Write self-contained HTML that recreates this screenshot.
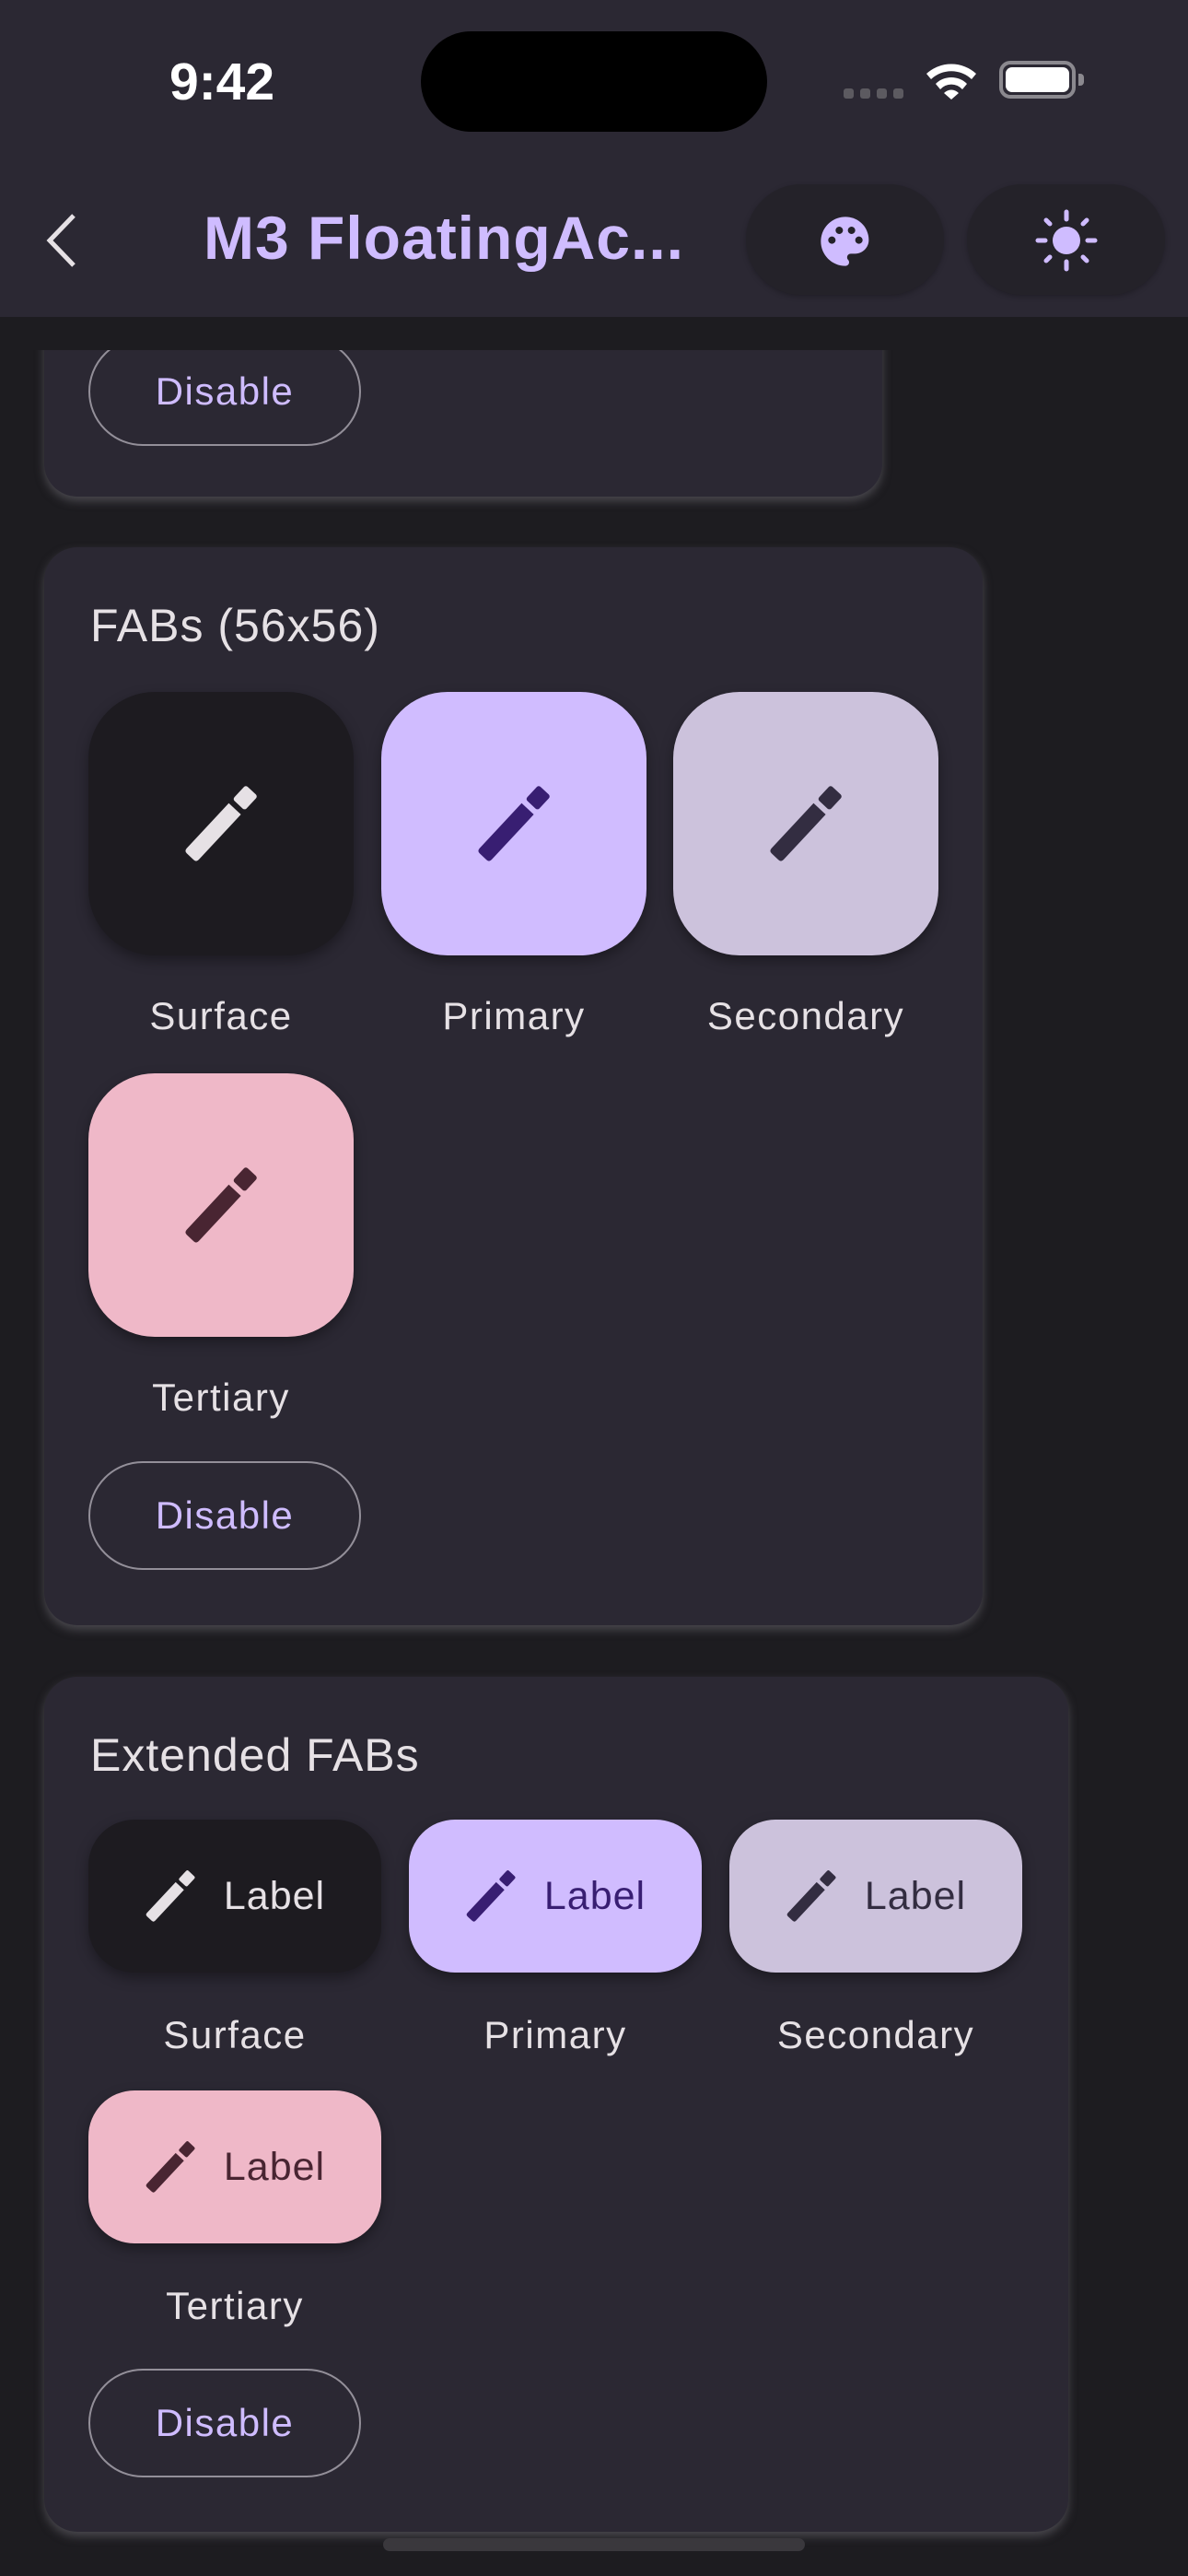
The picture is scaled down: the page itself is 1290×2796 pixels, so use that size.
<!DOCTYPE html>
<html><head><meta charset="utf-8"><style>
*{margin:0;padding:0;box-sizing:border-box}
body{width:1290px;height:2796px;background:#1d1c20;position:relative;overflow:hidden;font-family:"Liberation Sans",sans-serif}
.abs{position:absolute}
.card{position:absolute;background:#2b2833;border-radius:36px;box-shadow:0 5px 10px rgba(110,108,115,.55)}
.title{position:absolute;left:50px;color:#e6e1e5;font-size:50px;letter-spacing:1px}
.fab{position:absolute;width:288px;height:286px;border-radius:72px;box-shadow:0 6px 14px rgba(0,0,0,.35);display:flex;align-items:center;justify-content:center}
.lbl{position:absolute;width:320px;text-align:center;color:#e6e1e5;font-size:42px;letter-spacing:1.5px}
.ext{position:absolute;width:318px;height:166px;border-radius:50px;box-shadow:0 6px 14px rgba(0,0,0,.35);display:flex;align-items:center;justify-content:center;font-size:43px;letter-spacing:1px}
.ext svg{margin-right:30px}
.dis{position:absolute;left:48px;width:296px;height:118px;border:2.5px solid #938f99;border-radius:59px;color:#cfbcff;font-size:42px;display:flex;align-items:center;justify-content:center;letter-spacing:1.5px}
svg{overflow:visible}
</style></head><body>
<!-- card 1 -->
<div class="card" style="left:48px;top:300px;width:910px;height:239px"><div class="dis" style="top:66px">Disable</div></div>
<div class="abs" style="left:0;top:344px;width:1290px;height:36px;background:#1d1c20"></div>
<!-- app bar -->
<div class="abs" style="left:0;top:0;width:1290px;height:344px;background:#2b2833"></div>
<div class="abs" style="left:184px;top:56px;color:#fff;font-size:57px;font-weight:bold">9:42</div>
<div class="abs" style="left:457px;top:34px;width:376px;height:109px;background:#000;border-radius:55px"></div>
<div class="abs" style="left:916px;top:96px;display:flex;gap:7px"><div style="width:11px;height:11px;background:#5c5a60;border-radius:3px"></div><div style="width:11px;height:11px;background:#5c5a60;border-radius:3px"></div><div style="width:11px;height:11px;background:#5c5a60;border-radius:3px"></div><div style="width:11px;height:11px;background:#5c5a60;border-radius:3px"></div></div>
<svg class="abs" style="left:1004px;top:64px" width="58" height="44" viewBox="0 0 58 44"><path d="M2 16 A40 40 0 0 1 56 16 L51 22 A32 32 0 0 0 7 22Z M12 27 A24 24 0 0 1 46 27 L41 33 A16 16 0 0 0 17 33Z M21 37 A11 11 0 0 1 37 37 L29 44Z" fill="#fff"/></svg>
<div class="abs" style="left:1085px;top:66px;width:83px;height:41px;border:4px solid #8b898f;border-radius:12px;padding:3px"><div style="width:100%;height:100%;background:#fff;border-radius:7px"></div></div>
<div class="abs" style="left:1171px;top:80px;width:6px;height:13px;background:#8b898f;border-radius:0 4px 4px 0"></div>
<svg class="abs" style="left:46px;top:230px" width="40" height="62" viewBox="0 0 40 62"><path d="M34 4 L8 31 L34 58" stroke="#e6e1e5" stroke-width="5" fill="none"/></svg>
<div class="abs" style="left:221px;top:220px;color:#cfbcff;font-size:66px;font-weight:bold;letter-spacing:1px">M3 FloatingAc...</div>
<div class="abs" style="left:810px;top:200px;width:215px;height:120px;border-radius:60px;background:#242229;box-shadow:0 2px 6px rgba(0,0,0,.25)"></div>
<div class="abs" style="left:1050px;top:200px;width:215px;height:120px;border-radius:60px;background:#242229;box-shadow:0 2px 6px rgba(0,0,0,.25)"></div>
<svg class="abs" style="left:886px;top:230px" width="64" height="64" viewBox="0 0 24 24"><path d="M12 2C6.5 2 2 6.5 2 12s4.5 10 10 10c.9 0 1.5-.7 1.5-1.5 0-.4-.2-.8-.4-1-.3-.3-.4-.7-.4-1 0-.9.7-1.5 1.5-1.5H16c3 0 5.5-2.5 5.5-5.5C21.5 6 17.2 2 12 2zM6.5 13c-.8 0-1.5-.7-1.5-1.5S5.7 10 6.5 10s1.5.7 1.5 1.5S7.3 13 6.5 13zm3-4C8.7 9 8 8.3 8 7.5S8.7 6 9.5 6s1.5.7 1.5 1.5S10.3 9 9.5 9zm5 0c-.8 0-1.5-.7-1.5-1.5S13.7 6 14.5 6s1.5.7 1.5 1.5S15.3 9 14.5 9zm3 4c-.8 0-1.5-.7-1.5-1.5s.7-1.5 1.5-1.5 1.5.7 1.5 1.5-.7 1.5-1.5 1.5z" fill="#cfbcff"/></svg>
<svg class="abs" style="left:1124px;top:227px" width="68" height="68" viewBox="0 0 68 68" stroke="#cfbcff" stroke-width="5" stroke-linecap="round"><circle cx="34" cy="34" r="15" fill="#cfbcff" stroke="none"/><path d="M34 3v8M34 57v8M3 34h8M57 34h8M12 12l4 4M52 52l4 4M12 56l4-4M52 16l4-4"/></svg>

<svg width="0" height="0" style="position:absolute"><defs><g id="pen" transform="rotate(-47 41 41)"><path d="M-4 32 L63 32 L63 50 L-4 50 Q-8 50 -8 46 L-8 36 Q-8 32 -4 32Z"/><rect x="69" y="32" width="21" height="18" rx="3"/></g></defs></svg>

<!-- card 2 -->
<div class="card" style="left:48px;top:594px;width:1019px;height:1170px">
 <div class="title" style="top:56px">FABs (56x56)</div>
 <div class="fab" style="left:48px;top:157px;background:#1d1b20"><svg width="82" height="82" viewBox="0 0 82 82" fill="#e6e1e5"><use href="#pen"/></svg></div>
 <div class="fab" style="left:366px;top:157px;background:#d0bcff"><svg width="82" height="82" viewBox="0 0 82 82" fill="#381e72"><use href="#pen"/></svg></div>
 <div class="fab" style="left:683px;top:157px;background:#ccc2dc"><svg width="82" height="82" viewBox="0 0 82 82" fill="#332d41"><use href="#pen"/></svg></div>
 <div class="lbl" style="left:32px;top:485px">Surface</div>
 <div class="lbl" style="left:350px;top:485px">Primary</div>
 <div class="lbl" style="left:667px;top:485px">Secondary</div>
 <div class="fab" style="left:48px;top:571px;background:#efb8c8"><svg width="82" height="82" viewBox="0 0 82 82" fill="#492532"><use href="#pen"/></svg></div>
 <div class="lbl" style="left:32px;top:899px">Tertiary</div>
 <div class="dis" style="top:992px">Disable</div>
</div>

<!-- card 3 -->
<div class="card" style="left:48px;top:1820px;width:1112px;height:928px">
 <div class="title" style="top:56px">Extended FABs</div>
 <div class="ext" style="left:48px;top:155px;background:#1d1b20;color:#e6e1e5"><svg width="56" height="56" viewBox="0 0 82 82" fill="#e6e1e5"><use href="#pen"/></svg>Label</div>
 <div class="ext" style="left:396px;top:155px;background:#d0bcff;color:#381e72"><svg width="56" height="56" viewBox="0 0 82 82" fill="#381e72"><use href="#pen"/></svg>Label</div>
 <div class="ext" style="left:744px;top:155px;background:#ccc2dc;color:#332d41"><svg width="56" height="56" viewBox="0 0 82 82" fill="#332d41"><use href="#pen"/></svg>Label</div>
 <div class="lbl" style="left:47px;top:365px">Surface</div>
 <div class="lbl" style="left:395px;top:365px">Primary</div>
 <div class="lbl" style="left:743px;top:365px">Secondary</div>
 <div class="ext" style="left:48px;top:449px;background:#efb8c8;color:#492532"><svg width="56" height="56" viewBox="0 0 82 82" fill="#492532"><use href="#pen"/></svg>Label</div>
 <div class="lbl" style="left:47px;top:659px">Tertiary</div>
 <div class="dis" style="top:751px">Disable</div>
</div>
<div class="abs" style="left:416px;top:2755px;width:458px;height:14px;border-radius:7px;background:#3a383d"></div>
</body></html>
